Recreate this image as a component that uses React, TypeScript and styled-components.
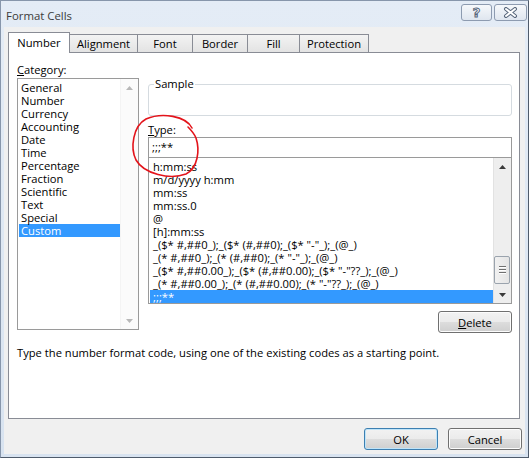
import styled, { createGlobalStyle } from "styled-components";

const GlobalStyle = createGlobalStyle`
  body {
    margin: 0;
    background: #ffffff;
    font-family: "Open Sans", "Noto Sans", sans-serif;
    font-size: 11.2px;
    color: #000;
  }
`;

const categories = [
  "General",
  "Number",
  "Currency",
  "Accounting",
  "Date",
  "Time",
  "Percentage",
  "Fraction",
  "Scientific",
  "Text",
  "Special",
  "Custom",
];

const formats = [
  "h:mm:ss",
  "m/d/yyyy h:mm",
  "mm:ss",
  "mm:ss.0",
  "@",
  "[h]:mm:ss",
  '_($* #,##0_);_($* (#,##0);_($* "-"_);_(@_)',
  '_(* #,##0_);_(* (#,##0);_(* "-"_);_(@_)',
  '_($* #,##0.00_);_($* (#,##0.00);_($* "-"??_);_(@_)',
  '_(* #,##0.00_);_(* (#,##0.00);_(* "-"??_);_(@_)',
  ";;;**",
];

const tabs = [
  { label: "Number", width: 62 },
  { label: "Alignment", width: 69 },
  { label: "Font", width: 56 },
  { label: "Border", width: 56 },
  { label: "Fill", width: 53 },
  { label: "Protection", width: 70 },
];

function Arrow({ up, faded }: { up?: boolean; faded?: boolean }) {
  return (
    <svg width="7" height="4" viewBox="0 0 7 4">
      <polygon
        points={up ? "0,4 7,4 3.5,0" : "0,0 7,0 3.5,4"}
        fill={faded ? "#b8b8b8" : "#3a3a3a"}
      />
    </svg>
  );
}

function App() {
  return (
    <Stage>
      <GlobalStyle />
      <Window>
        <TitleBar>
          <Title>Format Cells</Title>
          <CaptionButton $w={31}>
            <HelpGlyph>?</HelpGlyph>
          </CaptionButton>
          <CaptionButton $w={33}>
            <svg width="15" height="11" viewBox="0 0 15 11">
              <path d="M3 2 L12 9 M12 2 L3 9" stroke="#56657a" strokeWidth="4" strokeLinecap="round" />
              <path d="M3 2 L12 9 M12 2 L3 9" stroke="#ffffff" strokeWidth="2" strokeLinecap="round" />
            </svg>
          </CaptionButton>
        </TitleBar>

        <Client>
          <TabRow>
            {tabs.map((t, i) => (
              <Tab key={t.label} $w={t.width} $active={i === 0}>
                {t.label}
              </Tab>
            ))}
          </TabRow>

          <Panel>
            <Columns>
              <LeftColumn>
                <FieldLabel>
                  <u>C</u>ategory:
                </FieldLabel>
                <ListBox $h={252}>
                  <Items>
                    {categories.map((c) => (
                      <Item key={c} $selected={c === "Custom"}>
                        {c}
                      </Item>
                    ))}
                  </Items>
                  <ScrollBar $disabled>
                    <ArrowBox>
                      <Arrow up faded />
                    </ArrowBox>
                    <Track />
                    <ArrowBox>
                      <Arrow faded />
                    </ArrowBox>
                  </ScrollBar>
                </ListBox>
              </LeftColumn>

              <RightColumn>
                <GroupBox>
                  <Legend>Sample</Legend>
                </GroupBox>
                <TypeLabel>
                  <u>T</u>ype:
                </TypeLabel>
                <TypeInput>;;;**</TypeInput>
                <ListBox $h={147} $joined>
                  <Items>
                    {formats.map((f, i) => (
                      <Item key={f} $selected={i === formats.length - 1} $pad={3}>
                        {f}
                      </Item>
                    ))}
                  </Items>
                  <ScrollBar>
                    <ArrowBox>
                      <Arrow up />
                    </ArrowBox>
                    <Track>
                      <Thumb>
                        <Grip />
                        <Grip />
                        <Grip />
                      </Thumb>
                    </Track>
                    <ArrowBox>
                      <Arrow />
                    </ArrowBox>
                  </ScrollBar>
                </ListBox>
                <DeleteRow>
                  <Button>
                    <u>D</u>elete
                  </Button>
                </DeleteRow>
              </RightColumn>
            </Columns>
            <HelpText>
              Type the number format code, using one of the existing codes as a starting point.
            </HelpText>
          </Panel>

          <ButtonRow>
            <Button $default>OK</Button>
            <Button>Cancel</Button>
          </ButtonRow>
        </Client>
      </Window>

      <Annotation width="531" height="461" viewBox="0 0 531 461">
        <path
          d="M192 128 C186 116, 162 112, 146 119 C133 126, 130 148, 136 160 C144 174, 170 180, 186 174 C198 168, 200 150, 196 138 C194 133, 191 130, 188 127"
          fill="none"
          stroke="#e3141b"
          strokeWidth="1.6"
          strokeLinecap="round"
        />
      </Annotation>
    </Stage>
  );
}

export default App;

const Stage = styled.div`
  position: relative;
  width: 531px;
  height: 461px;
`;

const Window = styled.div`
  width: 529px;
  height: 458px;
  box-sizing: border-box;
  border: 1px solid #8796ab;
  border-right-color: #4f5b6b;
  border-bottom-color: #4f5b6b;
  background: linear-gradient(#e4ecf6, #d8e3f0);
  display: flex;
  flex-direction: column;
`;

const TitleBar = styled.div`
  height: 26px;
  display: flex;
  align-items: flex-start;
  padding: 3px 1px 0 5px;
  box-sizing: border-box;
  gap: 2px;
`;

const Title = styled.div`
  flex: 1;
  margin-top: 4px;
  color: #3b3b3b;
  font-size: 11.4px;
`;

const CaptionButton = styled.div<{ $w: number }>`
  width: ${(p) => p.$w}px;
  height: 17px;
  box-sizing: border-box;
  border: 1px solid #8d9bb0;
  border-radius: 3px;
  background: linear-gradient(#f6f8fb, #dfe6ef);
  display: flex;
  align-items: center;
  justify-content: center;
`;

const HelpGlyph = styled.span`
  font-family: "DejaVu Sans", sans-serif;
  font-weight: bold;
  font-size: 13px;
  line-height: 13px;
  color: #ffffff;
  -webkit-text-stroke: 1px #56657a;
`;

const Client = styled.div`
  flex: 1;
  margin: 0 3px 3px 3px;
  background: #f0f0f0;
  padding: 5px 3px 0 4px;
  display: flex;
  flex-direction: column;
`;

const TabRow = styled.div`
  display: flex;
  align-items: flex-end;
  height: 21px;
  position: relative;
  z-index: 1;
  margin-bottom: -1px;
`;

const Tab = styled.div<{ $w: number; $active?: boolean }>`
  width: ${(p) => p.$w}px;
  height: ${(p) => (p.$active ? 21 : 19)}px;
  box-sizing: border-box;
  border: 1px solid #898c95;
  border-bottom: ${(p) => (p.$active ? "none" : "1px solid #898c95")};
  margin-left: -1px;
  background: ${(p) => (p.$active ? "#ffffff" : "linear-gradient(#f3f3f3, #e3e3e3)")};
  display: flex;
  align-items: center;
  justify-content: center;
  padding-bottom: ${(p) => (p.$active ? 2 : 0)}px;
  &:first-child {
    margin-left: 0;
  }
`;

const Panel = styled.div`
  width: 512px;
  height: 367px;
  box-sizing: border-box;
  border: 1px solid #898c95;
  background: #ffffff;
  padding: 9px 7px 0 8px;
`;

const Columns = styled.div`
  display: flex;
  align-items: flex-start;
  gap: 9px;
`;

const LeftColumn = styled.div`
  width: 122px;
  display: flex;
  flex-direction: column;
`;

const RightColumn = styled.div`
  width: 364px;
  display: flex;
  flex-direction: column;
`;

const FieldLabel = styled.div`
  height: 16px;
  line-height: 15px;
`;

const TypeLabel = styled.div`
  height: 15px;
  line-height: 15px;
  margin-top: 6px;
`;

const ListBox = styled.div<{ $h: number; $joined?: boolean }>`
  height: ${(p) => p.$h}px;
  box-sizing: border-box;
  border: 1px solid #9a9a9a;
  margin-top: ${(p) => (p.$joined ? -1 : 0)}px;
  background: #ffffff;
  display: flex;
`;

const Items = styled.div`
  flex: 1;
  padding: 2px 0 0 1px;
  overflow: hidden;
`;

const Item = styled.div<{ $selected?: boolean; $pad?: number }>`
  height: 13px;
  line-height: 13px;
  padding-left: ${(p) => p.$pad ?? 2}px;
  white-space: nowrap;
  background: ${(p) => (p.$selected ? "#3399ff" : "transparent")};
  color: ${(p) => (p.$selected ? "#ffffff" : "#000000")};
`;

const ScrollBar = styled.div<{ $disabled?: boolean }>`
  width: 17px;
  display: flex;
  flex-direction: column;
  background: ${(p) => (p.$disabled ? "#fbfbfb" : "#eeeeee")};
  border-left: 1px solid ${(p) => (p.$disabled ? "#f4f4f4" : "#e2e2e2")};
`;

const ArrowBox = styled.div`
  height: 17px;
  display: flex;
  align-items: center;
  justify-content: center;
`;

const Track = styled.div`
  flex: 1;
  display: flex;
  flex-direction: column;
  justify-content: flex-end;
  padding-bottom: 2px;
`;

const Thumb = styled.div`
  height: 28px;
  margin: 0 1px 0 0;
  box-sizing: border-box;
  border: 1px solid #9aa3ad;
  border-radius: 2px;
  background: linear-gradient(90deg, #f1f1f1, #e4e4e4);
  display: flex;
  flex-direction: column;
  align-items: center;
  justify-content: center;
  gap: 1px;
`;

const Grip = styled.div`
  width: 7px;
  height: 1px;
  background: #6f6f6f;
  border-bottom: 1px solid #ffffff;
`;

const GroupBox = styled.div`
  margin-top: 22px;
  height: 32px;
  box-sizing: border-box;
  border: 1px solid #d5dbe0;
  border-radius: 3px;
  padding-left: 5px;
`;

const Legend = styled.div`
  width: fit-content;
  margin-top: -8px;
  padding: 0 1px;
  line-height: 14px;
  background: #ffffff;
`;

const TypeInput = styled.div`
  height: 21px;
  box-sizing: border-box;
  border: 1px solid #9a9a9a;
  padding: 0 0 0 3px;
  line-height: 18px;
`;

const DeleteRow = styled.div`
  margin-top: 7px;
  display: flex;
  justify-content: flex-end;
`;

const Button = styled.div<{ $default?: boolean }>`
  width: 74px;
  height: 22px;
  box-sizing: border-box;
  border: 1px solid ${(p) => (p.$default ? "#3c7fb1" : "#707070")};
  border-radius: 3px;
  background: linear-gradient(#f2f2f2 0%, #ebebeb 50%, #dddddd 51%, #cfcfcf 100%);
  box-shadow: inset 0 0 0 1px ${(p) => (p.$default ? "#bfe4f9" : "#fcfcfc")};
  display: flex;
  align-items: center;
  justify-content: center;
`;

const HelpText = styled.div`
  margin-top: 12px;
  line-height: 15px;
`;

const ButtonRow = styled.div`
  display: flex;
  justify-content: flex-end;
  gap: 10px;
  margin-top: 9px;
`;

const Annotation = styled.svg`
  position: absolute;
  left: 0;
  top: 0;
  pointer-events: none;
`;
